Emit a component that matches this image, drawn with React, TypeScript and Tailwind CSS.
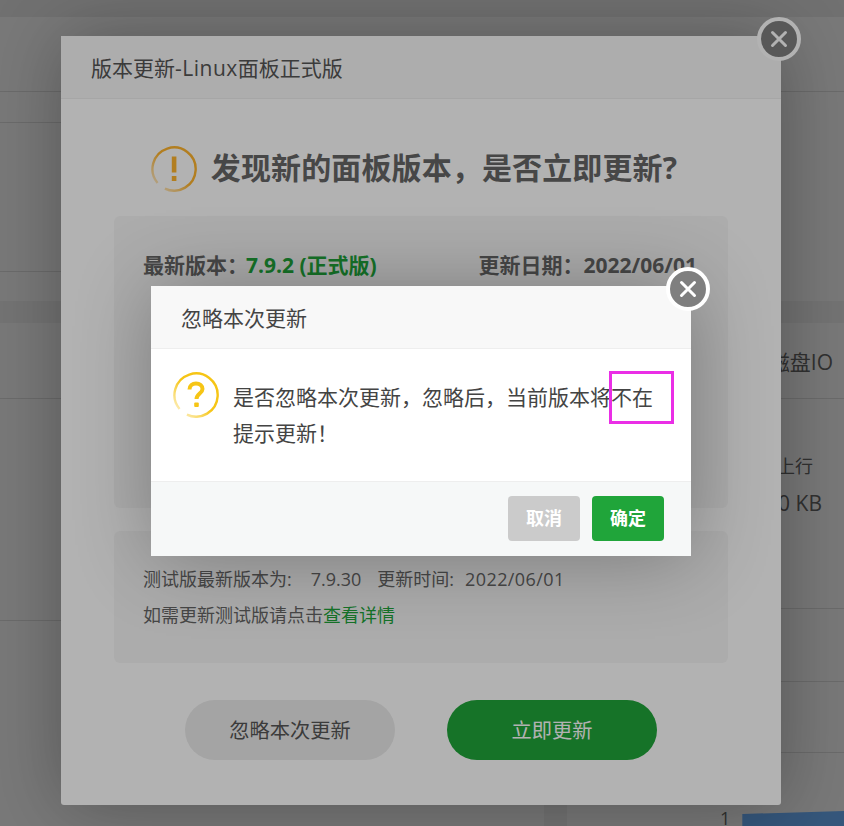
function CloseButton({ className }: { className: string }) {
  return (
    <button className={`absolute flex h-[44px] w-[44px] items-center justify-center rounded-full border-[4px] border-white bg-[#7f7f7f] ${className}`}>
      <svg width="20" height="20" viewBox="0 0 20 20" fill="none" stroke="white" strokeWidth="3" strokeLinecap="round">
        <path d="M3.5 3.5 16.5 16.5M16.5 3.5 3.5 16.5" />
      </svg>
    </button>
  );
}

function RingIcon({ id, color, children }: { id: string; color: string; children: React.ReactNode }) {
  return (
    <svg width="46" height="46" viewBox="0 0 46 46" fill="none" className="shrink-0">
      <defs>
        <linearGradient id={id} gradientUnits="userSpaceOnUse" x1="40" y1="8" x2="8" y2="40">
          <stop offset="0.5" stopColor={color} />
          <stop offset="1" stopColor={color} stopOpacity="0.35" />
        </linearGradient>
      </defs>
      <path d="M6.5 36.9A21.6 21.6 0 1 1 13.9 42.6" stroke={`url(#${id})`} strokeWidth="2.4" />
      {children}
    </svg>
  );
}

function PageBehind() {
  return (
    <div className="flex h-[826px] flex-col bg-[#eeeeee] text-[#666666]">
      <div className="h-[17px] shrink-0 bg-[#e8e8e8]" />
      <div className="h-[75px] shrink-0 border-b border-[#dddddd] bg-[#fafafa]" />
      <div className="h-[209px] shrink-0 bg-[#fafafa]">
        <div className="h-[31px] w-[100px] border-b border-[#dddddd]" />
        <div className="h-[149px] w-[100px] border-b border-[#dddddd]" />
      </div>
      <div className="h-[22px] shrink-0 bg-[#eeeeee]" />
      <div className="flex min-h-0 flex-1 gap-[23px]">
        <div className="flex w-[544px] shrink-0 flex-col bg-[#fafafa]">
          <div className="h-[76px] border-b border-[#dddddd]" />
          <div className="h-[222px] w-[100px] border-b border-[#dddddd]" />
        </div>
        <div className="flex flex-1 flex-col bg-[#fafafa]">
          <div className="flex h-[76px] items-center justify-end border-b border-[#dddddd] pr-[11px] pt-[4px] text-[21px]">磁盘IO</div>
          <div className="flex h-[85px] items-end justify-end pr-[31px] text-[18px] leading-[36px]">上行</div>
          <div className="flex h-[40px] items-center justify-end pr-[22px] text-[21px]">0 KB</div>
          <div className="h-[85px] border-b border-[#dddddd]" />
          <div className="h-[73px] border-b border-[#dddddd]" />
          <div className="h-[71px] border-b border-[#dddddd]" />
          <div className="flex flex-1 items-end gap-[12px] pl-[153px]">
            <span className="translate-y-[4px] text-[18px] leading-[24px]">1</span>
            <div className="h-[15px] flex-1 bg-[#6fb4ff] [clip-path:polygon(0_3px,100%_0,100%_100%,0_100%)]" />
          </div>
        </div>
      </div>
    </div>
  );
}

export default function App() {
  return (
    <div className="relative h-[826px] w-[844px] overflow-hidden font-['Open_Sans','Noto_Sans_CJK_SC',sans-serif]">
      <PageBehind />
      <div className="absolute inset-0 bg-black/30" />

      <div className="absolute left-[61px] top-[36px] flex h-[769px] w-[720px] flex-col rounded-[3px] bg-white shadow-[1.5px_1.5px_75px_rgba(0,0,0,0.3)]">
        <div className="flex h-[63px] shrink-0 items-center border-b border-[#eeeeee] bg-[#f8f8f8] pl-[30px] pt-[3px] text-[21px] text-[#555555]">
          版本更新<span className="tracking-[0.5px]">-Linux</span>面板正式版
        </div>
        <div className="flex items-center justify-center gap-[14px] pr-[14px] pt-[47px]">
          <RingIcon id="warn" color="#ffb52e">
            <rect x="20.8" y="10.5" width="4.6" height="16" fill="#ffb52e" />
            <rect x="20.8" y="30" width="4.6" height="5" fill="#ffb52e" />
          </RingIcon>
          <h1 className="-mt-[3px] text-[30px] font-bold leading-[45px] tracking-[0.13px] text-[#666666]">发现新的面板版本，是否立即更新?</h1>
        </div>
        <div className="mx-[53px] mt-[24px] h-[292px] shrink-0 rounded-[6px] bg-[#f7f7f7] pl-[29px] pr-[31px] pt-[31px] text-[21px] font-bold leading-[36px] text-[#666666]">
          <div className="flex justify-between">
            <span>
              最新版本：<span className="-ml-[2px] text-[#20a53a]">7.9.2 (正式版)</span>
            </span>
            <span>更新日期：2022/06/01</span>
          </div>
        </div>
        <div className="mx-[53px] mt-[23px] h-[132px] shrink-0 rounded-[6px] bg-[#f7f7f7] px-[29px] pt-[30px] text-[18px] leading-[36px] text-[#666666]">
          <div>
            测试版最新版本为:<span className="ml-[19px]">7.9.30</span>
            <span className="ml-[16px]">更新时间:</span>
            <span className="ml-[11px] tracking-[0.4px]">2022/06/01</span>
          </div>
          <div>
            如需更新测试版请点击<span className="text-[#20a53a]">查看详情</span>
          </div>
        </div>
        <div className="mt-[37px] flex justify-center gap-[52px]">
          <button className="h-[60px] w-[210px] rounded-full bg-[#ebebeb] text-[20.25px] text-[#555555]">忽略本次更新</button>
          <button className="h-[60px] w-[210px] rounded-full bg-[#20a53a] text-[20.25px] text-white">立即更新</button>
        </div>
      </div>
      <CloseButton className="left-[757px] top-[17px]" />

      <div className="absolute inset-0 bg-black/30" />

      <div className="absolute left-[151px] top-[286px] flex h-[270px] w-[540px] flex-col bg-white shadow-[1.5px_1.5px_75px_rgba(0,0,0,0.3)]">
        <div className="flex h-[63px] shrink-0 items-center border-b border-[#eeeeee] bg-[#f8f8f8] pl-[30px] pt-[3px] text-[21px] text-[#444444]">
          忽略本次更新
        </div>
        <div className="flex flex-1 items-start gap-[14px] pl-[22px] pr-[20px] pt-[23px]">
          <RingIcon id="ask" color="#f6c515">
            <path d="M16.5 17.5C16.5 13.5 19.5 11.5 23 11.5C26.8 11.5 29.5 13.8 29.5 17C29.5 21.5 23.5 21.8 23.5 27" stroke="#f6c515" strokeWidth="4" />
            <rect x="21.2" y="30.5" width="4.6" height="4.6" rx="1" fill="#f6c515" />
          </RingIcon>
          <p className="pt-[7px] text-[21px] leading-[36px] text-[#444444]">是否忽略本次更新，忽略后，当前版本将不在提示更新！</p>
        </div>
        <div className="flex h-[75px] shrink-0 items-center justify-end gap-[12px] border-t border-[#eeeeee] bg-[#f6f8f8] pb-[2px] pr-[27px]">
          <button className="h-[45px] w-[72px] rounded-[4px] bg-[#cbcbcb] text-[18px] font-bold text-white">取消</button>
          <button className="h-[45px] w-[72px] rounded-[4px] bg-[#20a53a] text-[18px] font-bold text-white">确定</button>
        </div>
      </div>
      <CloseButton className="left-[666px] top-[267px]" />

      <div className="absolute left-[609px] top-[371px] h-[53px] w-[65px] border-[3px] border-[#ea2ee6]" />
    </div>
  );
}
